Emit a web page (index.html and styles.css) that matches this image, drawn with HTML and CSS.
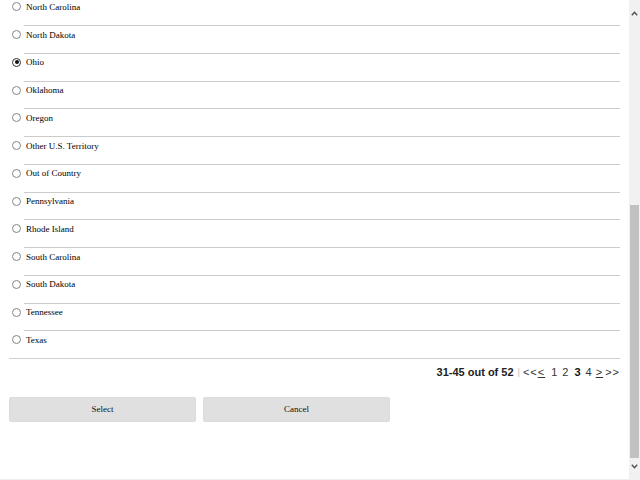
FILE: index.html
```html
<!DOCTYPE html>
<html>
<head>
<meta charset="utf-8">
<link rel="stylesheet" href="styles.css">
</head>
<body>
<div class="viewport">
  <div class="page">
    <div class="list">
      <div class="row"><label class="opt"><input type="radio" name="st"><span>North Carolina</span></label><div class="rule"></div></div>
      <div class="row"><label class="opt"><input type="radio" name="st"><span>North Dakota</span></label><div class="rule"></div></div>
      <div class="row"><label class="opt"><input type="radio" name="st" checked><span>Ohio</span></label><div class="rule"></div></div>
      <div class="row"><label class="opt"><input type="radio" name="st"><span>Oklahoma</span></label><div class="rule"></div></div>
      <div class="row"><label class="opt"><input type="radio" name="st"><span>Oregon</span></label><div class="rule"></div></div>
      <div class="row"><label class="opt"><input type="radio" name="st"><span>Other U.S. Territory</span></label><div class="rule"></div></div>
      <div class="row"><label class="opt"><input type="radio" name="st"><span>Out of Country</span></label><div class="rule"></div></div>
      <div class="row"><label class="opt"><input type="radio" name="st"><span>Pennsylvania</span></label><div class="rule"></div></div>
      <div class="row"><label class="opt"><input type="radio" name="st"><span>Rhode Island</span></label><div class="rule"></div></div>
      <div class="row"><label class="opt"><input type="radio" name="st"><span>South Carolina</span></label><div class="rule"></div></div>
      <div class="row"><label class="opt"><input type="radio" name="st"><span>South Dakota</span></label><div class="rule"></div></div>
      <div class="row"><label class="opt"><input type="radio" name="st"><span>Tennessee</span></label><div class="rule"></div></div>
      <div class="row last"><label class="opt"><input type="radio" name="st"><span>Texas</span></label></div>
    </div>
    <div class="pager">
      <span class="count">31-45 out of 52</span>
      <span class="sep">|</span>
      <span class="arr">&lt;&lt;</span><a class="arr link prev">&lt;</a>
      <span class="num n1">1</span>
      <span class="num n2">2</span>
      <span class="num cur">3</span>
      <span class="num n4">4</span>
      <a class="arr link next">&gt;</a>
      <span class="arr last-pg">&gt;&gt;</span>
    </div>
    <div class="actions">
      <button class="btn">Select</button>
      <button class="btn">Cancel</button>
    </div>
  </div>
  <div class="scrollbar">
    <svg class="arrow up" width="7" height="5" viewBox="0 0 7 5"><polyline points="0.8,4.2 3.5,1.2 6.2,4.2" fill="none" stroke="#505050" stroke-width="1.4"/></svg>
    <div class="thumb"></div>
    <svg class="arrow down" width="7" height="5" viewBox="0 0 7 5"><polyline points="0.8,0.8 3.5,3.8 6.2,0.8" fill="none" stroke="#505050" stroke-width="1.4"/></svg>
  </div>
  <div class="hbar"></div>
</div>
</body>
</html>
```
FILE: styles.css
```css
html, body {
  margin: 0;
  padding: 0;
  background: #fff;
  overflow: hidden;
}
.viewport {
  position: relative;
  width: 640px;
  height: 480px;
  overflow: hidden;
}
.page {
  width: 611px;
  padding-left: 9px;
  margin-top: -1.75px;
  font-family: "Liberation Serif", "Times New Roman", serif;
  font-size: 9px;
  color: #000;
}
.row {
  display: flex;
  flex-direction: column;
}
.opt {
  display: flex;
  align-items: center;
  height: 17px;
}
.opt input {
  appearance: none;
  -webkit-appearance: none;
  width: 9px;
  height: 9px;
  margin: 0 5px 0 3px;
  border: 1px solid #858585;
  border-radius: 50%;
  background: #fff;
  box-sizing: border-box;
  position: relative;
}
.opt input:checked {
  border-color: #333;
}
.opt input:checked::after {
  content: "";
  position: absolute;
  left: 1.5px;
  top: 1.5px;
  width: 4px;
  height: 4px;
  border-radius: 50%;
  background: #111;
}
.rule {
  margin-top: 9.75px;
  margin-left: 15px;
  height: 1px;
  background: #cccccc;
}
.row.last {
  border-bottom: 1px solid #d0d0d0;
  padding-bottom: 9.75px;
}
.pager {
  display: flex;
  justify-content: flex-end;
  align-items: center;
  height: 26px;
  padding-right: 1px;
  font-family: "Liberation Sans", Arial, sans-serif;
  font-size: 11px;
  color: #333;
}
.count {
  font-weight: bold;
  color: #222;
}
.sep {
  color: #bbb;
  font-size: 9px;
  margin: 0 3px 0 4px;
}
.arr {
  letter-spacing: 1px;
}
.link {
  text-decoration: underline;
}
.prev { margin-right: 6px; }
.n1 { margin-right: 5px; }
.n2 { margin-right: 6px; }
.cur {
  font-weight: bold;
  color: #111;
  margin-right: 5px;
}
.n4 { margin-right: 4px; }
.next { margin-right: 2px; }
.last-pg { margin-right: -1px; }
.actions {
  display: flex;
  gap: 7px;
  margin-top: 12px;
}
.btn {
  width: 187px;
  height: 25px;
  background: #e0e0e0;
  border: 1px solid #dcdcdc;
  border-radius: 2px;
  font-family: "Liberation Serif", "Times New Roman", serif;
  font-size: 9px;
  color: #111;
  padding: 0 0 2px;
}
.scrollbar {
  position: absolute;
  top: 0;
  right: 0;
  width: 11px;
  height: 480px;
  background: #f1f1f1;
}
.thumb {
  position: absolute;
  left: 1px;
  top: 205px;
  width: 9px;
  height: 253px;
  background: #c1c1c1;
}
.arrow {
  position: absolute;
  left: 2px;
}
.arrow.up { top: 11px; }
.arrow.down { top: 464px; }
.hbar {
  position: absolute;
  left: 0;
  bottom: 0;
  width: 629px;
  height: 1px;
  background: #eeeeee;
}
```
